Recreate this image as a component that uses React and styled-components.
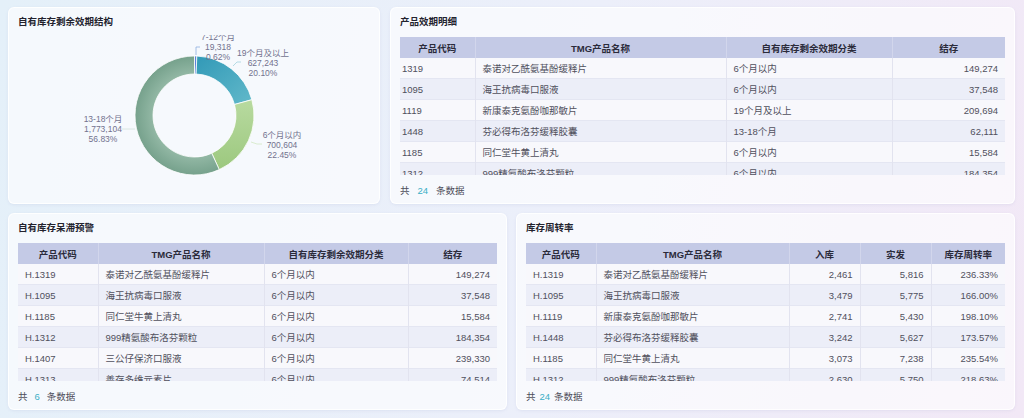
import React from "react";
import styled, { createGlobalStyle } from "styled-components";

const GlobalStyle = createGlobalStyle`
  html, body {
    margin: 0;
    padding: 0;
  }
  body {
    font-family: "Liberation Sans", "Noto Sans CJK SC", sans-serif;
    background: linear-gradient(100deg, #e4f0f9 0%, #eceffa 55%, #f2e8f6 100%);
  }
`;

const Page = styled.div`
  box-sizing: border-box;
  width: 1024px;
  height: 418px;
  padding: 7px 9px 8px 8px;
  display: grid;
  grid-template-rows: 1fr 1fr;
  row-gap: 9px;
`;

const Row = styled.div`
  display: grid;
  grid-template-columns: ${(p) => p.$cols};
  column-gap: ${(p) => p.$gap}px;
  min-height: 0;
`;

const Card = styled.section`
  box-sizing: border-box;
  display: flex;
  flex-direction: column;
  min-width: 0;
  min-height: 0;
  padding: 6px 9px 0;
  border-radius: 6px;
  border: 1px solid rgba(255, 255, 255, 0.85);
  background: rgba(255, 255, 255, 0.62);
  box-shadow: 0 1px 3px rgba(140, 150, 200, 0.14);
  overflow: hidden;
`;

const Title = styled.h3`
  margin: 0;
  font-size: 9.5px;
  line-height: 16px;
  font-weight: 700;
  color: #23232e;
`;

const ChartBox = styled.div`
  margin-top: 5px;
  height: 162px;
  overflow: hidden;
`;

const TableBox = styled.div`
  margin-top: 7px;
  height: 138px;
  overflow: hidden;
`;

const Table = styled.table`
  width: 100%;
  border-collapse: collapse;
  table-layout: fixed;
  font-size: 9.5px;
`;

const Th = styled.th`
  height: 21px;
  padding: 0 4px;
  background: #c4cae6;
  color: #2b2b3a;
  font-weight: 700;
  text-align: center;
  border-right: 1px solid #d2d6ec;
  white-space: nowrap;
  &:last-child {
    border-right: none;
  }
`;

const Tr = styled.tr`
  background: ${(p) => (p.$alt ? "#eceef8" : "#f8f8fc")};
  border-bottom: 1px solid #e4e6f2;
`;

const Td = styled.td`
  height: 20px;
  padding: 0 7px 0 ${(p) => (p.$pad != null ? p.$pad : 7)}px;
  color: #50505c;
  text-align: ${(p) => p.$align || "left"};
  border-right: 1px solid #e2e3ef;
  white-space: nowrap;
  overflow: hidden;
  &:last-child {
    border-right: none;
  }
`;

const Footer = styled.div`
  margin-top: 6px;
  font-size: 9.5px;
  line-height: 20px;
  color: #4d4d5a;
`;

const Count = styled.span`
  color: #3aafc6;
  margin: 0 ${(p) => p.$space}px;
`;

const LabelText = styled.text`
  font-family: "Liberation Sans", "Noto Sans CJK SC", sans-serif;
  font-size: 8.5px;
  fill: #72728e;
`;

function DataTable({ columns, rows, firstPad }) {
  return (
    <TableBox>
      <Table>
        <colgroup>
          {columns.map((c) => (
            <col key={c.title} style={{ width: c.width }} />
          ))}
        </colgroup>
        <thead>
          <tr>
            {columns.map((c) => (
              <Th key={c.title}>{c.title}</Th>
            ))}
          </tr>
        </thead>
        <tbody>
          {rows.map((r, i) => (
            <Tr key={i} $alt={i % 2 === 1}>
              {r.map((v, j) => (
                <Td key={j} $align={columns[j].align} $pad={j === 0 ? firstPad : undefined}>
                  {v}
                </Td>
              ))}
            </Tr>
          ))}
        </tbody>
      </Table>
    </TableBox>
  );
}

const slices = [
  { name: "7-12个月", value: 19318, fill: "#5b80d8" },
  { name: "19个月及以上", value: 627243, fill: "url(#gTeal)" },
  { name: "6个月以内", value: 700604, fill: "url(#gGreen)" },
  { name: "13-18个月", value: 1773104, fill: "url(#gSage)" },
];

const cx = 176.5;
const cy = 80.5;
const R = 59.5;
const r0 = 41.5;

function pt(a, rad) {
  return [cx + rad * Math.sin(a), cy - rad * Math.cos(a)];
}

function arc(a0, a1) {
  const large = a1 - a0 > Math.PI ? 1 : 0;
  const [x0, y0] = pt(a0, R);
  const [x1, y1] = pt(a1, R);
  const [x2, y2] = pt(a1, r0);
  const [x3, y3] = pt(a0, r0);
  return `M${x0},${y0} A${R},${R} 0 ${large} 1 ${x1},${y1} L${x2},${y2} A${r0},${r0} 0 ${large} 0 ${x3},${y3} Z`;
}

const labels = [
  { x: 200, y: 4.5, lines: ["7-12个月", "19,318", "0.62%"] },
  { x: 245, y: 20.5, lines: ["19个月及以上", "627,243", "20.10%"] },
  { x: 264, y: 102.5, lines: ["6个月以内", "700,604", "22.45%"] },
  { x: 85, y: 86.5, lines: ["13-18个月", "1,773,104", "56.83%"] },
];

function Donut() {
  const total = slices.reduce((s, d) => s + d.value, 0);
  let acc = 0;
  const paths = slices.map((d) => {
    const a0 = (acc / total) * Math.PI * 2;
    acc += d.value;
    const a1 = (acc / total) * Math.PI * 2;
    return <path key={d.name} d={arc(a0, a1)} fill={d.fill} stroke="#ffffff" strokeWidth="0.8" />;
  });

  return (
    <svg width="100%" height="162" viewBox="0 0 352 162">
      <defs>
        <linearGradient id="gTeal" x1="0" y1="0" x2="1" y2="1">
          <stop offset="0" stopColor="#3199b7" />
          <stop offset="1" stopColor="#62b9ca" />
        </linearGradient>
        <linearGradient id="gGreen" x1="0" y1="0" x2="0" y2="1">
          <stop offset="0" stopColor="#b8daa0" />
          <stop offset="1" stopColor="#9cc87e" />
        </linearGradient>
        <radialGradient id="gSage" cx={cx} cy={cy} r={R} gradientUnits="userSpaceOnUse">
          <stop offset="0.68" stopColor="#94b9a6" />
          <stop offset="1" stopColor="#76a18c" />
        </radialGradient>
      </defs>
      {paths}
      <g fill="none" strokeWidth="0.8">
        <path d="M178,20 L178,12 L182,12" stroke="#8fb0e0" />
        <path d="M215,31 L219,27 L223,27" stroke="#a4d3de" />
        <path d="M233,107 L239,109 L244,109" stroke="#d3e8c4" />
        <path d="M104,94 L117,94" stroke="#d3e2da" />
      </g>
      {labels.map((l) => (
        <LabelText key={l.lines[0]} x={l.x} y={l.y} textAnchor="middle">
          {l.lines.map((t, i) => (
            <tspan key={i} x={l.x} dy={i === 0 ? 0 : 10}>
              {t}
            </tspan>
          ))}
        </LabelText>
      ))}
    </svg>
  );
}

const expiryCols = [
  { title: "产品代码", width: "75px" },
  { title: "TMG产品名称", width: "251px" },
  { title: "自有库存剩余效期分类", width: "166px" },
  { title: "结存", align: "right" },
];

const expiryRows = [
  ["1319", "泰诺对乙酰氨基酚缓释片", "6个月以内", "149,274"],
  ["1095", "海王抗病毒口服液", "6个月以内", "37,548"],
  ["1119", "新康泰克氨酚咖那敏片", "19个月及以上", "209,694"],
  ["1448", "芬必得布洛芬缓释胶囊", "13-18个月", "62,111"],
  ["1185", "同仁堂牛黄上清丸", "6个月以内", "15,584"],
  ["1312", "999精氨酸布洛芬颗粒", "6个月以内", "184,354"],
  ["1407", "三公仔保济口服液", "6个月以内", "239,330"],
];

const stagnantCols = [
  { title: "产品代码", width: "80px" },
  { title: "TMG产品名称", width: "166px" },
  { title: "自有库存剩余效期分类", width: "144px" },
  { title: "结存", align: "right" },
];

const stagnantRows = [
  ["H.1319", "泰诺对乙酰氨基酚缓释片", "6个月以内", "149,274"],
  ["H.1095", "海王抗病毒口服液", "6个月以内", "37,548"],
  ["H.1185", "同仁堂牛黄上清丸", "6个月以内", "15,584"],
  ["H.1312", "999精氨酸布洛芬颗粒", "6个月以内", "184,354"],
  ["H.1407", "三公仔保济口服液", "6个月以内", "239,330"],
  ["H.1313", "善存多维元素片", "6个月以内", "74,514"],
];

const turnoverCols = [
  { title: "产品代码", width: "70px" },
  { title: "TMG产品名称", width: "193px" },
  { title: "入库", width: "71px", align: "right" },
  { title: "实发", width: "71px", align: "right" },
  { title: "库存周转率", align: "right" },
];

const turnoverRows = [
  ["H.1319", "泰诺对乙酰氨基酚缓释片", "2,461", "5,816", "236.33%"],
  ["H.1095", "海王抗病毒口服液", "3,479", "5,775", "166.00%"],
  ["H.1119", "新康泰克氨酚咖那敏片", "2,741", "5,430", "198.10%"],
  ["H.1448", "芬必得布洛芬缓释胶囊", "3,242", "5,627", "173.57%"],
  ["H.1185", "同仁堂牛黄上清丸", "3,073", "7,238", "235.54%"],
  ["H.1312", "999精氨酸布洛芬颗粒", "2,630", "5,750", "218.63%"],
  ["H.1407", "三公仔保济口服液", "2,918", "6,104", "209.18%"],
];

export default function App() {
  return (
    <>
      <GlobalStyle />
      <Page>
        <Row $cols="372px 1fr" $gap={10}>
          <Card>
            <Title>自有库存剩余效期结构</Title>
            <ChartBox>
              <Donut />
            </ChartBox>
          </Card>
          <Card>
            <Title>产品效期明细</Title>
            <DataTable columns={expiryCols} rows={expiryRows} firstPad={2} />
            <Footer>
              共<Count $space={8}>24</Count>条数据
            </Footer>
          </Card>
        </Row>
        <Row $cols="1fr 1fr" $gap={9}>
          <Card>
            <Title>自有库存呆滞预警</Title>
            <DataTable columns={stagnantCols} rows={stagnantRows} />
            <Footer>
              共<Count $space={7}>6</Count>条数据
            </Footer>
          </Card>
          <Card>
            <Title>库存周转率</Title>
            <DataTable columns={turnoverCols} rows={turnoverRows} />
            <Footer>
              共<Count $space={4}>24</Count>条数据
            </Footer>
          </Card>
        </Row>
      </Page>
    </>
  );
}
